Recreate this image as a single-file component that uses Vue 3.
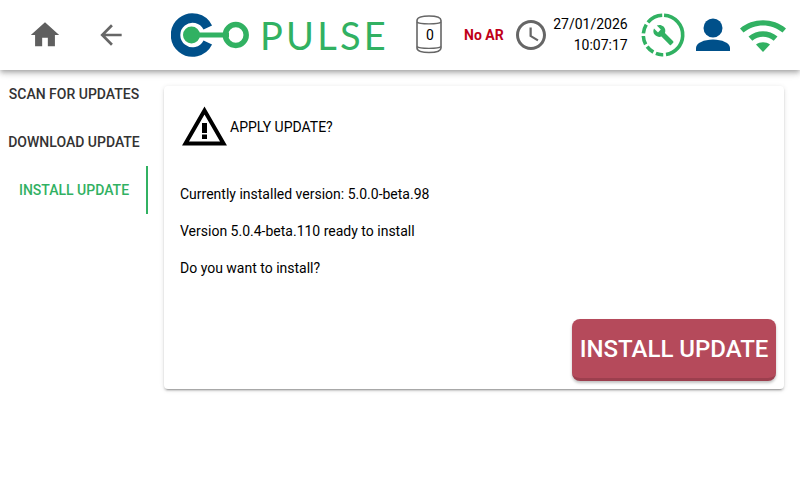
<template>
  <div class="app">
    <header class="top-bar">
      <button class="nav-btn home">
        <svg width="34" height="34" viewBox="0 0 24 24"><path fill="#5f5f5f" d="M10 20v-6h4v6h5v-8h3L12 3 2 12h3v8z" /></svg>
      </button>
      <button class="nav-btn back">
        <svg width="32" height="32" viewBox="0 0 24 24"><path fill="#666" d="M20 11H7.830l5.590-5.590L12 4l-8 8 8 8 1.410-1.410L7.830 13H20z" /></svg>
      </button>
      <div class="logo">
        <svg width="92" height="46" viewBox="0 0 92 46">
          <path d="M36.800 15.500 A17 17 0 1 0 36.800 30.500" fill="none" stroke="#00508a" stroke-width="9.500" />
          <circle cx="20.500" cy="23" r="8.500" fill="#31b162" />
          <path d="M20 23H58" stroke="#31b162" stroke-width="5" />
          <circle cx="64.800" cy="23" r="10.400" fill="none" stroke="#31b162" stroke-width="5.500" />
        </svg>
        <span class="logo-text">PULSE</span>
      </div>
      <div class="can">
        <svg width="28" height="40" viewBox="0 0 28 40">
          <path d="M2 5.500C2 2 8 1 14 1s12 1 12 4.500V33C26 36.500 20 37.500 14 37.500S2 36.500 2 33z" fill="none" stroke="#666" stroke-width="1.600" />
          <path d="M2 7c2 2.500 22 2.500 24 0M2 31.500c2 2.500 22 2.500 24 0" fill="none" stroke="#666" stroke-width="1.300" />
        </svg>
        <span class="can-count">{{ canCount }}</span>
      </div>
      <span class="ar-status">No AR</span>
      <svg class="clock" width="36" height="36" viewBox="0 0 24 24"><path fill="#666" d="M11.990 2C6.470 2 2 6.480 2 12s4.470 10 9.990 10C17.520 22 22 17.520 22 12S17.520 2 11.990 2zM12 20c-4.420 0-8-3.580-8-8s3.580-8 8-8 8 3.580 8 8-3.580 8-8 8zm.5-13H11v6l5.250 3.150.75-1.230-4.500-2.670z" /></svg>
      <div class="date-time">
        <div>{{ date }}</div>
        <div>{{ time }}</div>
      </div>
      <svg class="service" width="44" height="44" viewBox="0 0 44 44">
        <circle cx="22" cy="22" r="19.700" fill="none" stroke="#31b162" stroke-width="3.600" stroke-dasharray="57.400 2.750 7.600 2.750 8.250 2.750 8.600 2.750 9.300 2.750 16.200 2.750" transform="rotate(-87 22 22)" />
        <path fill="#31b162" d="M35 31.500l-2.800 2.800c-.4.400-1 .4-1.400 0L20.300 23.800c-2.700 1-5.800.4-8-1.800-2.300-2.300-2.700-5.700-1.300-8.400l5 5 3.500-3.500-5-5c2.700-1.300 6.100-.9 8.400 1.300 2.200 2.200 2.800 5.300 1.800 8l10.300 10.300c.4.500.4 1.100 0 1.800z" transform="translate(4.200 4.500) scale(.8)" />
      </svg>
      <svg class="user" width="40" height="40" viewBox="0 0 40 40">
        <circle cx="20" cy="13" r="9.500" fill="#00508a" />
        <path fill="#00508a" d="M3 36v-3c0-5 8-8.500 17-8.500S37 28 37 33v3z" />
      </svg>
      <svg class="wifi" width="46" height="36" viewBox="0 0 46 36">
        <path fill="#31b162" d="M0 11.500C12.500 .5 33.500 .5 46 11.500l-3.500 4C31 6 15 6 3.500 15.500z" />
        <path fill="#31b162" d="M8.500 19.500C17 12.500 29 12.500 37.500 19.500l-3.800 4.200C27.500 18.500 18.500 18.500 12.300 23.700z" />
        <path fill="#31b162" d="M16 27.500c4-3 10-3 14 0l-7 7.500z" />
      </svg>
    </header>

    <div class="main">
      <nav class="side-tabs">
        <div
          v-for="tab in tabs"
          :key="tab"
          class="tab"
          :class="{ active: tab === activeTab }"
        >
          {{ tab }}
        </div>
      </nav>

      <section class="card">
        <div class="card-head">
          <svg width="48" height="44" viewBox="0 0 48 44">
            <path d="M22.500 5.500 L41.500 38.500 H3.500 Z" fill="none" stroke="#000" stroke-width="4" />
            <path d="M20 18h5v10h-5zM20 29.500h5v4.500h-5z" fill="#000" />
          </svg>
          <span>APPLY UPDATE?</span>
        </div>
        <div class="card-body">
          <p>Currently installed version: {{ currentVersion }}</p>
          <p>Version {{ newVersion }} ready to install</p>
          <p>Do you want to install?</p>
        </div>
        <div class="card-actions">
          <button class="btn-install">INSTALL UPDATE</button>
        </div>
      </section>
    </div>
  </div>
</template>

<script setup>
import { ref } from 'vue'

const tabs = ['SCAN FOR UPDATES', 'DOWNLOAD UPDATE', 'INSTALL UPDATE']
const activeTab = ref('INSTALL UPDATE')

const canCount = ref(0)
const date = ref('27/01/2026')
const time = ref('10:07:17')
const currentVersion = ref('5.0.0-beta.98')
const newVersion = ref('5.0.4-beta.110')
</script>

<style>
html,
body {
  margin: 0;
  background: #fff;
}
</style>

<style scoped>
.app {
  width: 800px;
  height: 480px;
  overflow: hidden;
  background: #fff;
  font-family: Roboto, "Liberation Sans", sans-serif;
  color: #000;
}

.top-bar {
  position: relative;
  z-index: 1;
  display: flex;
  align-items: center;
  height: 70px;
  background: #fff;
  box-shadow: 0 2px 4px -1px rgba(0, 0, 0, 0.2), 0 4px 5px rgba(0, 0, 0, 0.14), 0 1px 10px rgba(0, 0, 0, 0.12);
}

.nav-btn {
  display: flex;
  padding: 0;
  border: none;
  background: none;
}

.home {
  margin-left: 28px;
}

.back {
  margin-left: 33px;
}

.logo {
  display: flex;
  align-items: center;
  flex-shrink: 0;
  margin-left: 44px;
  width: 216px;
}

.logo svg {
  flex-shrink: 0;
}

.logo-text {
  margin-left: -3px;
  font-family: Lato, sans-serif;
  font-size: 38px;
  font-weight: 400;
  letter-spacing: 3.2px;
  color: #31b162;
}

.can {
  position: relative;
  display: flex;
  margin-left: 28px;
}

.can-count {
  position: absolute;
  left: 2px;
  right: 0;
  top: 11px;
  text-align: center;
  font-size: 14px;
  line-height: 18px;
}

.ar-status {
  margin-left: 21px;
  font-size: 14px;
  font-weight: 700;
  color: #c00018;
}

.clock {
  margin-left: 9px;
}

.date-time {
  margin-left: 4px;
  width: 75px;
  text-align: right;
  font-size: 14px;
  line-height: 21px;
}

.service {
  margin-left: 13px;
}

.user {
  margin-left: 8px;
}

.wifi {
  margin-left: 7px;
}

.main {
  display: flex;
  align-items: flex-start;
}

.side-tabs {
  width: 148px;
  flex-shrink: 0;
}

.tab {
  height: 48px;
  display: flex;
  align-items: center;
  justify-content: center;
  box-sizing: border-box;
  font-size: 14px;
  font-weight: 500;
  color: #333;
  white-space: nowrap;
}

.tab.active {
  padding-left: 2px;
  color: #31b162;
  border-right: 2px solid #31b162;
}

.card {
  display: flex;
  flex-direction: column;
  box-sizing: border-box;
  width: 620px;
  height: 303px;
  margin: 16px 0 0 16px;
  padding: 19px 8px 8px 16px;
  border-radius: 4px;
  background: #fff;
  box-shadow: 0 3px 1px -2px rgba(0, 0, 0, 0.2), 0 2px 2px rgba(0, 0, 0, 0.14), 0 1px 5px rgba(0, 0, 0, 0.12);
}

.card-head {
  display: flex;
  align-items: center;
  padding-left: 2px;
  font-size: 14px;
}

.card-body {
  margin-top: 35px;
  font-size: 14px;
  line-height: 20px;
}

.card-body p {
  margin: 0 0 17px;
}

.card-actions {
  display: flex;
  justify-content: flex-end;
  margin-top: auto;
}

.btn-install {
  width: 204px;
  height: 62px;
  padding: 0;
  border: none;
  border-bottom: 3px solid #9c3f4e;
  border-radius: 8px;
  background: #b54a5b;
  color: #fff;
  font-family: inherit;
  font-size: 24px;
  font-weight: 500;
  box-shadow: 0 2px 3px rgba(0, 0, 0, 0.25);
}
</style>
